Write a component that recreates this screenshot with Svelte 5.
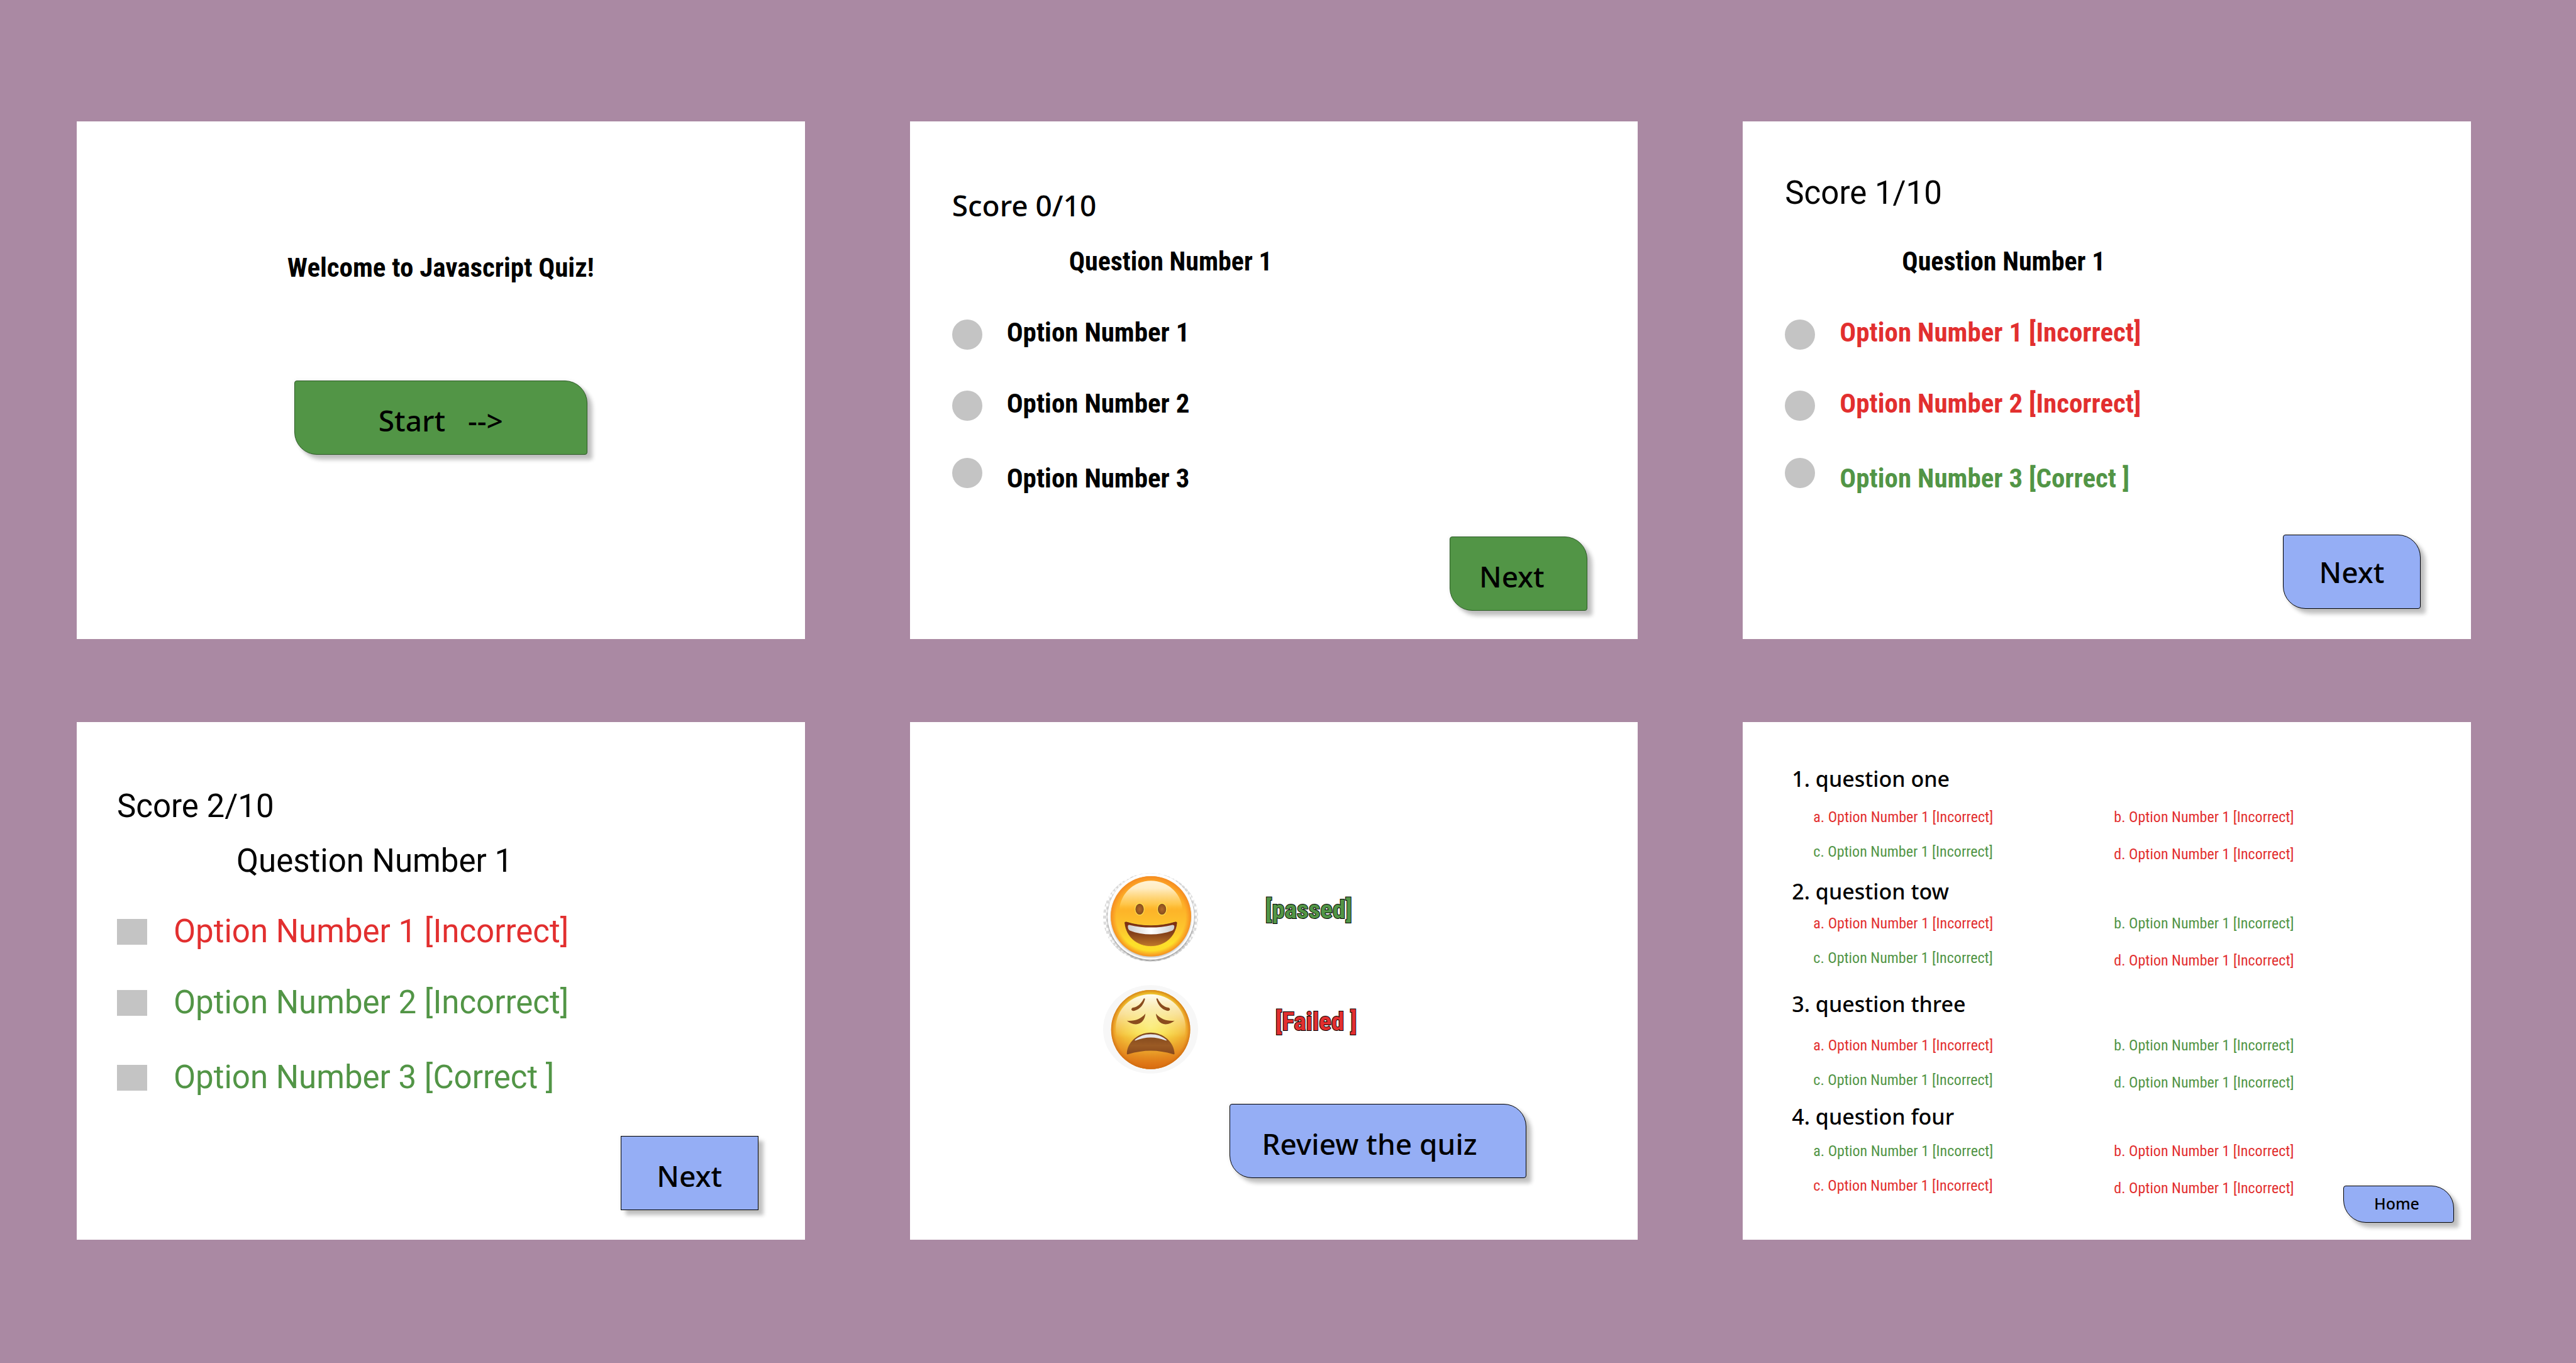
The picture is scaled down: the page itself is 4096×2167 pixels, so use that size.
<script lang="ts">
  type Tone = 'plain' | 'wrong' | 'right';
  type Choice = { text: string; tone: Tone };
  type Quiz = { id: string; look: string; score: string; kind: 'radio' | 'checkbox'; button: string; choices: Choice[] };

  const quizzes: Quiz[] = [
    {
      id: 'fresh', look: 'fresh', score: 'Score 0/10', kind: 'radio', button: 'green low',
      choices: [
        { text: 'Option Number 1', tone: 'plain' },
        { text: 'Option Number 2', tone: 'plain' },
        { text: 'Option Number 3', tone: 'plain' }
      ]
    },
    {
      id: 'single', look: 'single', score: 'Score 1/10', kind: 'radio', button: 'blue',
      choices: [
        { text: 'Option Number 1 [Incorrect]', tone: 'wrong' },
        { text: 'Option Number 2 [Incorrect]', tone: 'wrong' },
        { text: 'Option Number 3 [Correct ]', tone: 'right' }
      ]
    },
    {
      id: 'multi', look: 'multi', score: 'Score 2/10', kind: 'checkbox', button: 'blue square low',
      choices: [
        { text: 'Option Number 1 [Incorrect]', tone: 'wrong' },
        { text: 'Option Number 2 [Incorrect]', tone: 'right' },
        { text: 'Option Number 3 [Correct ]', tone: 'right' }
      ]
    }
  ];

  const answer = 'Option Number 1 [Incorrect]';
  // Tones are listed for a, b, c, d.
  const review: { title: string; gap: string; tones: Tone[] }[] = [
    { title: '1. question one', gap: 'medium', tones: ['wrong', 'wrong', 'right', 'wrong'] },
    { title: '2. question tow', gap: 'tight', tones: ['wrong', 'right', 'right', 'wrong'] },
    { title: '3. question three', gap: 'loose', tones: ['wrong', 'right', 'right', 'right'] },
    { title: '4. question four', gap: 'snug', tones: ['right', 'wrong', 'wrong', 'wrong'] }
  ];
  const letters = ['a', 'b', 'c', 'd'];
  const columns = [[0, 2], [1, 3]];
</script>

{#snippet quizScreen(quiz: Quiz)}
  <section class="screen quiz {quiz.look}">
    <p class="score">{quiz.score}</p>
    <h2 class="question">Question Number 1</h2>
    <ul class="choices">
      {#each quiz.choices as choice, i}
        <li>
          <label class="choice {choice.tone}" for="{quiz.id}-{i}">
            <input id="{quiz.id}-{i}" class="mark {quiz.kind}" type={quiz.kind} name={quiz.id} />
            <span>{choice.text}</span>
          </label>
        </li>
      {/each}
    </ul>
    <button type="button" class="btn next {quiz.button}">Next</button>
  </section>
{/snippet}

<main class="board">
  <section class="screen welcome">
    <h1 class="title">Welcome to Javascript Quiz!</h1>
    <button type="button" class="btn green low start">Start&nbsp;&nbsp; --&gt;</button>
  </section>

  {@render quizScreen(quizzes[0])}
  {@render quizScreen(quizzes[1])}
  {@render quizScreen(quizzes[2])}

  <section class="screen results">
    <div class="result">
      <svg class="face" viewBox="0 0 188 175" role="img" aria-label="Grinning face">
        <defs>
          <pattern id="check" width="12" height="12" patternUnits="userSpaceOnUse">
            <rect width="12" height="12" fill="#fff" />
            <rect width="6" height="6" fill="#dcdcdc" />
            <rect x="6" y="6" width="6" height="6" fill="#dcdcdc" />
          </pattern>
          <clipPath id="oval"><ellipse cx="94" cy="87.5" rx="94" ry="87.5" /></clipPath>
          <filter id="soft" x="-20%" y="-20%" width="140%" height="140%"><feGaussianBlur stdDeviation="2.2" /></filter>
          <linearGradient id="skin" x1="0" y1="0" x2="0" y2="1">
            <stop offset="0" stop-color="#fca326" />
            <stop offset=".4" stop-color="#fdb228" />
            <stop offset=".68" stop-color="#fdc82e" />
            <stop offset=".84" stop-color="#fde02a" />
            <stop offset="1" stop-color="#fcd92a" />
          </linearGradient>
          <radialGradient id="rim">
            <stop offset=".86" stop-color="#f88b1c" stop-opacity="0" />
            <stop offset="1" stop-color="#f58a22" stop-opacity=".95" />
          </radialGradient>
          <linearGradient id="shine" x1="0" y1="0" x2="0" y2="1">
            <stop offset="0" stop-color="#fff3d6" />
            <stop offset=".12" stop-color="#ffedc4" />
            <stop offset=".38" stop-color="#ffcb50" stop-opacity=".8" />
            <stop offset=".48" stop-color="#ffc02e" stop-opacity="0" />
          </linearGradient>
          <linearGradient id="mouth" x1="0" y1="0" x2="0" y2="1">
            <stop offset="0" stop-color="#7c2c12" />
            <stop offset=".5" stop-color="#87431a" />
            <stop offset="1" stop-color="#c0792a" />
          </linearGradient>
          <linearGradient id="teeth" x1="0" y1="0" x2="1" y2="0">
            <stop offset="0" stop-color="#cfcfcf" />
            <stop offset=".5" stop-color="#fff" />
            <stop offset="1" stop-color="#cfcfcf" />
          </linearGradient>
          <radialGradient id="eye">
            <stop offset="0" stop-color="#b0692a" />
            <stop offset="1" stop-color="#854b1c" />
          </radialGradient>
        </defs>
        <g clip-path="url(#oval)">
          <rect width="188" height="175" fill="url(#check)" />
          <circle cx="94.6" cy="88" r="86" fill="#777" opacity=".75" filter="url(#soft)" />
          <circle cx="94.6" cy="85.7" r="85.6" fill="#fff" />
          <circle cx="94.7" cy="87.5" r="79.5" fill="#999" opacity=".7" filter="url(#soft)" />
        </g>
        <circle cx="94.7" cy="85.3" r="79.5" fill="url(#skin)" />
        <circle cx="94.7" cy="85.3" r="79.5" fill="url(#rim)" />
        <ellipse cx="94.7" cy="77" rx="63" ry="62" fill="url(#shine)" />
        <g fill="url(#eye)" stroke="#ffe352" stroke-width="1.4">
          <ellipse cx="72.3" cy="71.3" rx="9" ry="11.6" />
          <ellipse cx="116.6" cy="71.3" rx="9" ry="11.6" />
        </g>
        <path d="M42 99c-.3-3 2.500-4 5-3.200 30 9.300 65 9.300 95 0 2.500-.8 5.300.2 5 3.200-3 27-25 46-52.500 46S45 126 42 99z" fill="url(#mouth)" stroke="#ffe02f" stroke-width="1" />
        <path d="M49 105c0-2 1.500-3 4-2.400 27 6.500 56 6.500 83 0 2.500-.6 5 .4 5 2.400 0 4-1 7-4 8.500-26 10-59 10-84 0-3-1.500-4-4.500-4-8.500z" fill="url(#teeth)" />
      </svg>
      <p class="verdict right">[passed]</p>
    </div>
    <div class="result failed">
      <svg class="face" viewBox="0 0 188 175" role="img" aria-label="Weary face">
        <defs>
          <radialGradient id="wearySkin" cx=".5" cy=".46" r=".58">
            <stop offset="0" stop-color="#fbee6e" />
            <stop offset=".3" stop-color="#f9e352" />
            <stop offset=".62" stop-color="#f4c43a" />
            <stop offset=".86" stop-color="#eea42a" />
            <stop offset="1" stop-color="#e0801c" />
          </radialGradient>
          <linearGradient id="wearyTop" x1="0" y1="0" x2="0" y2="1">
            <stop offset="0" stop-color="#edc62c" />
            <stop offset=".35" stop-color="#edc62c" stop-opacity="0" />
          </linearGradient>
          <linearGradient id="wearyLow" x1="0" y1="0" x2="0" y2="1">
            <stop offset=".55" stop-color="#e07a18" stop-opacity="0" />
            <stop offset="1" stop-color="#d9670f" stop-opacity=".95" />
          </linearGradient>
          <radialGradient id="wearyRim">
            <stop offset=".9" stop-color="#dc7a14" stop-opacity="0" />
            <stop offset="1" stop-color="#cc6a0f" stop-opacity=".7" />
          </radialGradient>
          <linearGradient id="wearyShine" x1="0" y1="0" x2="0" y2="1">
            <stop offset="0" stop-color="#fffdf2" />
            <stop offset=".3" stop-color="#fcf2cc" stop-opacity=".65" />
            <stop offset=".65" stop-color="#fbe7a0" stop-opacity="0" />
          </linearGradient>
          <linearGradient id="wearyMouth" x1="0" y1="0" x2="0" y2="1">
            <stop offset="0" stop-color="#7d441b" />
            <stop offset=".6" stop-color="#9a5a24" />
            <stop offset="1" stop-color="#86481c" />
          </linearGradient>
        </defs>
        <ellipse cx="94" cy="87.500" rx="94" ry="87.500" fill="#f7f7f7" />
        <circle cx="94.200" cy="88" r="78.300" fill="url(#wearySkin)" />
        <circle cx="94.200" cy="88" r="78.300" fill="url(#wearyTop)" />
        <circle cx="94.200" cy="88" r="78.300" fill="url(#wearyLow)" />
        <circle cx="94.200" cy="88" r="78.300" fill="url(#wearyRim)" />
        <ellipse cx="94.200" cy="84" rx="69" ry="66" fill="url(#wearyShine)" />
        <g fill="#8a4c1e">
          <path d="M80 27.500c1-2 3.300-1.500 2.800 1-3.300 11-9.800 19.500-20.800 22.300-6.500 1.200-8-4.300-3-6.200 9.500-1.300 16.500-8 21-17.100z" />
          <path d="M108.400 27.500c-1-2-3.300-1.500-2.800 1 3.300 11 9.800 19.500 20.800 22.300 6.500 1.200 8-4.300 3-6.200-9.500-1.300-16.500-8-21-17.100z" />
          <path d="M47 70.500c14 1.500 28-3 36.800-14-1 12-8 21-19 21-7 0-13-3-17.800-7z" />
          <path d="M141.400 70.500c-14 1.500-28-3-36.800-14 1 12 8 21 19 21 7 0 13-3 17.800-7z" />
        </g>
        <path d="M47 135c1-22 22-41 47.200-41s46.200 19 47.200 41c.1 1.800-1 2.400-3 1.700-30-9.200-58-9.200-88.400 0-2 .7-3.100.1-3-1.700z" fill="url(#wearyMouth)" />
        <path d="M63 108.500c8-7.500 19-11.500 31.200-11.500s23.200 4 31.200 11.500c.6 1-.2 1.600-1.400 1.200-20-8-39.600-8-59.600 0-1.200.4-2-.2-1.400-1.200z" fill="#e6e6ea" />
      </svg>
      <p class="verdict wrong">[Failed ]</p>
    </div>
    <button type="button" class="btn blue low review-btn">Review the quiz</button>
  </section>

  <section class="screen review">
    <div class="review-list">
      {#each review as item}
        <article>
          <h3 class="review-title">{item.title}</h3>
          <div class="answers {item.gap}">
            {#each columns as column}
              <ul class="answer-column">
                {#each column as n}
                  <li class={item.tones[n]}>{letters[n]}. {answer}</li>
                {/each}
              </ul>
            {/each}
          </div>
        </article>
      {/each}
    </div>
    <button type="button" class="btn blue home">Home</button>
  </section>
</main>

<style>
  :global(body) {
    margin: 0;
    background: #aa89a3;
  }

  .board {
    --display: "Roboto Condensed", Roboto, sans-serif;
    --label: "Noto Sans", sans-serif;
    --plain: Roboto, sans-serif;
    box-sizing: border-box;
    min-height: 100vh;
    padding: 193px 167px 193px 122px;
    display: grid;
    grid-template-columns: repeat(3, 1fr);
    align-content: start;
    gap: 132px 167px;
    background: #aa89a3;
    color: #000;
  }

  h1, h2, h3, p, ul {
    margin: 0;
    padding: 0;
    font-weight: 400;
    list-style: none;
  }

  .screen {
    box-sizing: border-box;
    aspect-ratio: 1440 / 1024;
    display: flex;
    flex-direction: column;
    background: #fff;
  }

  .plain { color: #000; }
  .wrong { color: #e22f2f; }
  .right { color: #529546; }

  .btn {
    box-sizing: border-box;
    height: 118px;
    padding: 0;
    border: 1px solid #000;
    border-radius: 4px 36px;
    font: 500 46px/64px var(--label);
    color: #000;
    box-shadow: 8px 8px 6px rgba(0, 0, 0, 0.24), 0 0 6px rgba(0, 0, 0, 0.08);
    cursor: pointer;
  }
  .green { background: #529546; border-color: #2c5a25; }
  .blue { background: #95aef5; }
  .low { padding-top: 8px; }
  .square { border-radius: 0; }

  .welcome {
    align-items: center;
    padding-top: 208px;
    gap: 156px;
  }
  .title {
    font: 700 43px/48px var(--display);
  }
  .start { width: 466px; }

  .quiz {
    padding: 101px 80px 45px 67px;
  }
  .score {
    font: 500 46px/64px var(--label);
  }
  .question {
    margin: 34px 0 64px 186px;
    font: 700 42px/48px var(--display);
  }
  .choice {
    display: flex;
    align-items: center;
    gap: 39px;
    width: fit-content;
    height: 48px;
    font: 700 43px/48px var(--display);
  }
  .choices li + li { margin-top: 65px; }
  .choices li:last-child { margin-top: 71px; }
  .mark {
    appearance: none;
    flex: none;
    width: 48px;
    background: #c4c4c4;
  }
  .radio {
    height: 48px;
    margin: 8px 0 0;
    border-radius: 50%;
  }
  li:last-child .radio { margin: 0 0 16px; }
  .checkbox {
    height: 41px;
    margin: 0;
  }
  .next {
    width: 219px;
    margin-top: auto;
    align-self: flex-end;
  }
  .fresh .next { padding-right: 22px; }

  .single { padding: 82px 80px 48px 67px; }
  .single .score,
  .multi .score { font: 400 51px/64px var(--plain); }
  .single .question { margin-top: 53px; }

  .multi { padding: 102px 74px 47px 64px; }
  .multi .question {
    margin: 31px 0 64px 190px;
    font: 400 51px/48px var(--plain);
  }
  .multi .choice {
    gap: 42px;
    font: 400 51px/48px var(--plain);
  }

  .results {
    padding: 240px 0 0 307px;
    gap: 37px;
  }
  .result {
    display: flex;
    align-items: center;
    gap: 107px;
  }
  .failed { gap: 123px; }
  .face {
    display: block;
    width: 151px;
    height: 141px;
  }
  .verdict {
    padding-bottom: 26px;
    font: 700 41px/48px var(--display);
    -webkit-text-stroke: 2px #000;
    paint-order: stroke fill;
  }
  .review-btn {
    width: 472px;
    margin: 11px 0 0 201px;
    padding-right: 26px;
  }

  .review {
    flex-direction: row;
    justify-content: space-between;
    padding: 68px 27px 27px 78px;
  }
  .review-list {
    display: grid;
    grid-auto-rows: 179px;
    align-content: start;
  }
  .review-title {
    font: 500 34px/44px var(--label);
  }
  .answers {
    display: grid;
    grid-template-columns: 478px auto;
    align-items: start;
    padding-left: 34px;
    font: 600 24px/30px var(--display);
  }
  .medium { padding-top: 24px; }
  .tight { padding-top: 14px; }
  .snug { padding-top: 18px; }
  .loose { padding-top: 29px; }
  .answer-column {
    display: grid;
    gap: 25px;
  }
  .answer-column:last-child { gap: 29px; }
  .home {
    align-self: flex-end;
    width: 176px;
    height: 59px;
    padding: 0 6px 4px 0;
    font-size: 25px;
    line-height: 32px;
  }
</style>
